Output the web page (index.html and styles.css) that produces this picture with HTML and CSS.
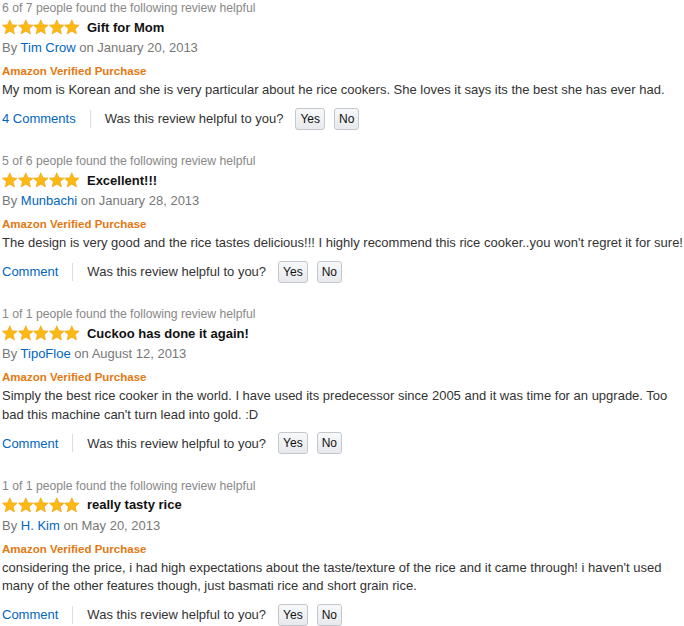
FILE: index.html
```html
<!DOCTYPE html>
<html lang="en">

<head>
    <meta charset="UTF-8" />
    <meta name="viewport" content="width=device-width, initial-scale=1.0" />
    <title>Customer Reviews</title>
    <link rel="stylesheet" href="styles.css">
</head>

<body>
    <svg width="0" height="0" class="defs">
        <symbol id="star" viewBox="0 0 16 16">
            <path d="M8 0.6 L10.2 5.6 L15.6 6.1 L11.5 9.7 L12.8 15.1 L8 12.3 L3.2 15.1 L4.5 9.7 L0.4 6.1 L5.8 5.6 Z"
                fill="#fdb913" stroke="#e8a10a" stroke-width="0.6" stroke-linejoin="round" />
        </symbol>
    </svg>

    <div class="reviews">
        <div class="review">
            <div class="votes">6 of 7 people found the following review helpful</div>
            <div class="title-row">
                <span class="stars">
                    <svg><use href="#star" /></svg><svg><use href="#star" /></svg><svg><use href="#star" /></svg><svg><use href="#star" /></svg><svg><use href="#star" /></svg>
                </span>
                <b class="title">Gift for Mom</b>
            </div>
            <div class="byline">By <a href="#">Tim Crow</a> on January 20, 2013</div>
            <div class="verified">Amazon Verified Purchase</div>
            <p class="text">My mom is Korean and she is very particular about he rice cookers. She loves it says its the best she has ever had.</p>
            <div class="footer">
                <a href="#" class="comments">4 Comments</a>
                <span class="sep"></span>
                <span class="ask">Was this review helpful to you?</span>
                <button>Yes</button>
                <button>No</button>
            </div>
        </div>

        <div class="review">
            <div class="votes">5 of 6 people found the following review helpful</div>
            <div class="title-row">
                <span class="stars">
                    <svg><use href="#star" /></svg><svg><use href="#star" /></svg><svg><use href="#star" /></svg><svg><use href="#star" /></svg><svg><use href="#star" /></svg>
                </span>
                <b class="title">Excellent!!!</b>
            </div>
            <div class="byline">By <a href="#">Munbachi</a> on January 28, 2013</div>
            <div class="verified">Amazon Verified Purchase</div>
            <p class="text">The design is very good and the rice tastes delicious!!! I highly recommend this rice cooker..you won't regret it for sure!</p>
            <div class="footer">
                <a href="#" class="comments">Comment</a>
                <span class="sep"></span>
                <span class="ask">Was this review helpful to you?</span>
                <button>Yes</button>
                <button>No</button>
            </div>
        </div>

        <div class="review">
            <div class="votes">1 of 1 people found the following review helpful</div>
            <div class="title-row">
                <span class="stars">
                    <svg><use href="#star" /></svg><svg><use href="#star" /></svg><svg><use href="#star" /></svg><svg><use href="#star" /></svg><svg><use href="#star" /></svg>
                </span>
                <b class="title">Cuckoo has done it again!</b>
            </div>
            <div class="byline">By <a href="#">TipoFloe</a> on August 12, 2013</div>
            <div class="verified">Amazon Verified Purchase</div>
            <p class="text">Simply the best rice cooker in the world. I have used its predecessor since 2005 and it was time for an upgrade. Too bad this machine can't turn lead into gold. :D</p>
            <div class="footer">
                <a href="#" class="comments">Comment</a>
                <span class="sep"></span>
                <span class="ask">Was this review helpful to you?</span>
                <button>Yes</button>
                <button>No</button>
            </div>
        </div>

        <div class="review">
            <div class="votes">1 of 1 people found the following review helpful</div>
            <div class="title-row">
                <span class="stars">
                    <svg><use href="#star" /></svg><svg><use href="#star" /></svg><svg><use href="#star" /></svg><svg><use href="#star" /></svg><svg><use href="#star" /></svg>
                </span>
                <b class="title">really tasty rice</b>
            </div>
            <div class="byline">By <a href="#">H. Kim</a> on May 20, 2013</div>
            <div class="verified">Amazon Verified Purchase</div>
            <p class="text">considering the price, i had high expectations about the taste/texture of the rice and it came through! i haven't used many of the other features though, just basmati rice and short grain rice.</p>
            <div class="footer">
                <a href="#" class="comments">Comment</a>
                <span class="sep"></span>
                <span class="ask">Was this review helpful to you?</span>
                <button>Yes</button>
                <button>No</button>
            </div>
        </div>
    </div>
</body>

</html>
```

FILE: styles.css
```css
body {
    margin: 0 0 0 2px;
    background: #fff;
    font-family: "Liberation Sans", Arial, sans-serif;
    font-size: 13px;
    color: #333;
}

.defs {
    position: absolute;
}

a {
    color: #0066c0;
    text-decoration: none;
}

.review {
    margin-bottom: 23.5px;
}

.votes {
    font-size: 12.2px;
    line-height: 14px;
    padding-top: 1px;
    color: #888;
}

.title-row {
    display: flex;
    align-items: center;
    height: 20px;
    margin-top: 2px;
}

.stars {
    display: flex;
    margin-right: 7px;
}

.stars svg {
    width: 15.6px;
    height: 16px;
}

.title {
    font-size: 13px;
    color: #111;
}

.byline {
    margin-top: 1px;
    line-height: 20px;
    color: #777;
}

.verified {
    margin-top: 5px;
    line-height: 16px;
    font-size: 11.5px;
    font-weight: bold;
    color: #e47911;
}

.text {
    margin: 2px 0 0;
    line-height: 18.5px;
    color: #333;
}

.footer {
    display: flex;
    align-items: center;
    height: 22px;
    margin-top: 8px;
}

.sep {
    width: 1px;
    height: 18px;
    background: #ddd;
    margin: 0 14px;
}

.ask {
    margin-right: 12px;
}

button {
    font-family: inherit;
    font-size: 12px;
    color: #111;
    height: 22px;
    padding: 0 4px;
    margin-right: 9px;
    border: 1px solid #c4c7cc;
    border-radius: 3px;
    background: linear-gradient(#f7f8fa, #e7e9ec);
    cursor: pointer;
}
```
